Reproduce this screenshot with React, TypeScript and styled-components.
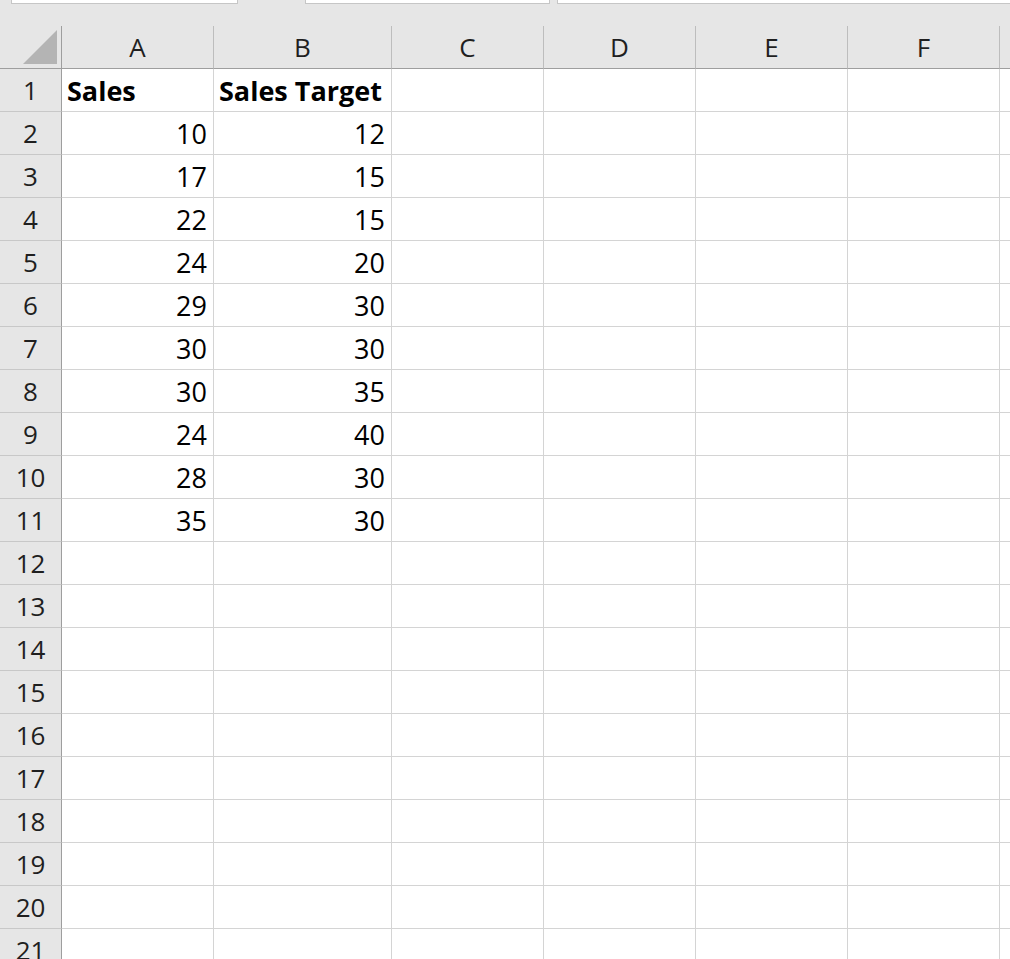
import { FC } from "react";
import styled, { createGlobalStyle } from "styled-components";

const GlobalStyle = createGlobalStyle`
  html, body {
    margin: 0;
    padding: 0;
    background: #ffffff;
    overflow: hidden;
  }
`;

// the last column only peeks in at the right edge, so it has no visible label
const columns = [
  { label: "A", width: 152 },
  { label: "B", width: 178 },
  { label: "C", width: 152 },
  { label: "D", width: 152 },
  { label: "E", width: 152 },
  { label: "F", width: 152 },
  { label: "", width: 152 },
];

const data: (string | number)[][] = [
  ["Sales", "Sales Target"],
  [10, 12],
  [17, 15],
  [22, 15],
  [24, 20],
  [29, 30],
  [30, 30],
  [30, 35],
  [24, 40],
  [28, 30],
  [35, 30],
];

const ROW_COUNT = 21;

const App: FC = () => (
  <Page>
    <GlobalStyle />
    <TopStrip>
      <InputBox $left={11} $width={227} />
      <InputBox $left={67} $width={245} />
      <InputBox $left={7} $width={460} />
    </TopStrip>
    <Sheet $cols={columns.map((c) => `${c.width}px`).join(" ")}>
      <Corner>
        <svg width="34" height="34" viewBox="0 0 34 34">
          <polygon points="34,0 34,34 0,34" fill="#b4b4b4" />
        </svg>
      </Corner>
      {columns.map((c, i) => (
        <ColHeader key={i}>{c.label}</ColHeader>
      ))}
      {Array.from({ length: ROW_COUNT }, (_, r) => {
        const row = data[r] || [];
        return [
          <RowHeader key={`h${r}`}>{r + 1}</RowHeader>,
          ...columns.map((_c, ci) => {
            const v = row[ci];
            return (
              <Cell
                key={`${r}-${ci}`}
                $bold={r === 0}
                $align={typeof v === "number" ? "right" : "left"}
              >
                {v ?? ""}
              </Cell>
            );
          }),
        ];
      })}
    </Sheet>
  </Page>
);

export default App;

const Page = styled.div`
  width: 1010px;
  height: 959px;
  overflow: hidden;
  background: #e6e6e6;
`;

const TopStrip = styled.div`
  height: 26px;
  display: flex;
  align-items: flex-start;
  background: #e6e6e6;
`;

const InputBox = styled.div<{ $left: number; $width: number }>`
  margin-left: ${(p) => p.$left}px;
  width: ${(p) => p.$width}px;
  height: 4px;
  flex-shrink: 0;
  box-sizing: border-box;
  background: #ffffff;
  border: 1px solid #c6c6c6;
  border-top: none;
`;

const Sheet = styled.div<{ $cols: string }>`
  display: grid;
  grid-template-columns: 62px ${(p) => p.$cols};
  grid-auto-rows: 43px;
  width: max-content;
  background: #ffffff;
`;

const HeaderBase = styled.div`
  box-sizing: border-box;
  background: #e6e6e6;
  color: #1f1f1f;
  font-family: "Open Sans", "Noto Sans", sans-serif;
  font-size: 26px;
  line-height: 41px;
  padding-top: 1px;
  text-align: center;
`;

const Corner = styled(HeaderBase)`
  display: flex;
  align-items: flex-end;
  justify-content: flex-end;
  padding: 0 4px 4px 0;
  border-right: 1px solid #9e9e9e;
  border-bottom: 1px solid #9e9e9e;
`;

const ColHeader = styled(HeaderBase)`
  border-bottom: 1px solid #9e9e9e;
  border-right: 1px solid #bdbdbd;
`;

const RowHeader = styled(HeaderBase)`
  border-right: 1px solid #9e9e9e;
  border-bottom: 1px solid #c8c8c8;
`;

const Cell = styled.div<{ $bold: boolean; $align: "left" | "right" }>`
  box-sizing: border-box;
  border-right: 1px solid #d4d4d4;
  border-bottom: 1px solid #d4d4d4;
  padding: 1px 6px 0 5px;
  font-family: "Open Sans", "Noto Sans", sans-serif;
  font-size: 27px;
  line-height: 41px;
  font-weight: ${(p) => (p.$bold ? 700 : 400)};
  text-align: ${(p) => p.$align};
  color: #000000;
  white-space: nowrap;
  overflow: hidden;
`;
